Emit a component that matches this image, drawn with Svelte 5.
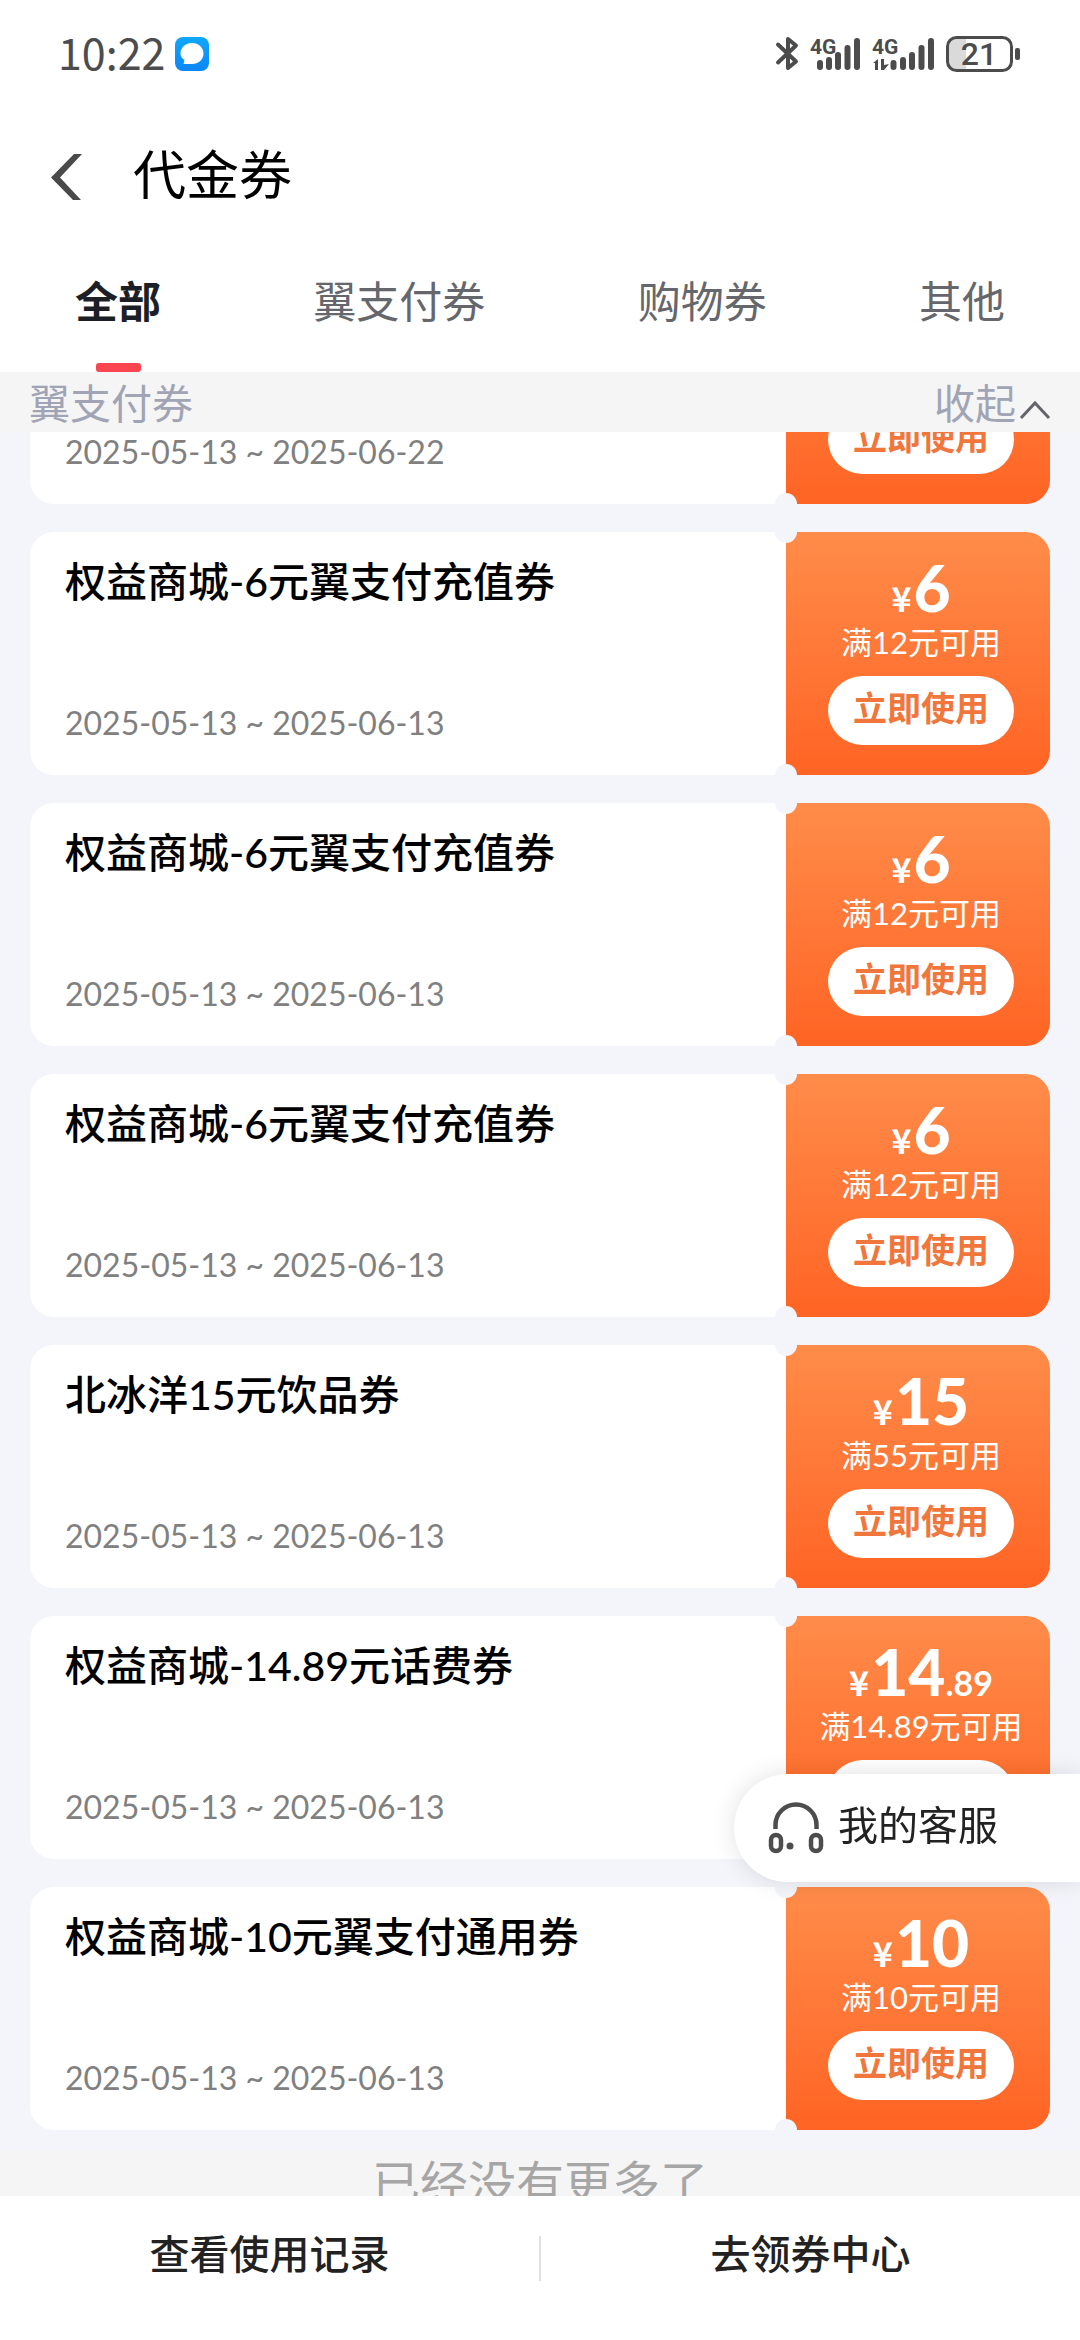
<script>
  const tabs = ['全部', '翼支付券', '购物券', '其他'];
  const coupons = [
    { title: '', date: '2025-05-13 ~ 2025-06-22', whole: '', cents: '', limit: '' },
    { title: '权益商城-6元翼支付充值券', date: '2025-05-13 ~ 2025-06-13', whole: '6', cents: '', limit: '12' },
    { title: '权益商城-6元翼支付充值券', date: '2025-05-13 ~ 2025-06-13', whole: '6', cents: '', limit: '12' },
    { title: '权益商城-6元翼支付充值券', date: '2025-05-13 ~ 2025-06-13', whole: '6', cents: '', limit: '12' },
    { title: '北冰洋15元饮品券', date: '2025-05-13 ~ 2025-06-13', whole: '15', cents: '', limit: '55' },
    { title: '权益商城-14.89元话费券', date: '2025-05-13 ~ 2025-06-13', whole: '14', cents: '.89', limit: '14.89' },
    { title: '权益商城-10元翼支付通用券', date: '2025-05-13 ~ 2025-06-13', whole: '10', cents: '', limit: '10' }
  ];

  let active = $state(0);

  // The list opens with the first coupon scrolled partly out of view.
  function openScrolled(node) {
    node.scrollTop = 171;
  }
</script>

<div class="page">
  <div class="status">
    <span class="time">10:22</span>
    <svg class="chat" width="34" height="34" viewBox="0 0 34 34" aria-hidden="true">
      <defs>
        <linearGradient id="chatbg" x1="0" y1="0" x2="0" y2="1">
          <stop offset="0" stop-color="#10a8fb" />
          <stop offset="1" stop-color="#0a86fa" />
        </linearGradient>
      </defs>
      <rect width="34" height="34" rx="8" fill="url(#chatbg)" />
      <path d="M17 6c6.500 0 11.500 4.500 11.500 10.500S23.500 27 17 27H8.500l1-4C7 21.500 5.500 19.500 5.500 16.500 5.500 10.500 10.500 6 17 6z" fill="#fff" />
    </svg>
    <svg class="signals" width="246" height="40" viewBox="0 0 246 40" aria-hidden="true">
      <g fill="none" stroke="#4c4c4c" stroke-width="4" stroke-linecap="round" stroke-linejoin="round">
        <path d="M4 10.500 22 27.500 14 34V23" />
        <path d="M4 28.500 22 11.500 14 5V19" />
      </g>
      <g class="net" fill="#4c4c4c">
        <text x="36" y="20">4G</text>
        <text x="98" y="20">4G</text>
      </g>
      <g stroke="#4c4c4c" stroke-width="6" stroke-linecap="round">
        <path d="M46 29v4M55 26v7M64 21v12M73.500 14v19M83 7v26" />
        <path d="M119.500 29v4M129 26v7M138 21v12M147.500 14v19M157 7v26" />
      </g>
      <path d="M99 29l5-4v11h-3v-7zM107 25h3v6l5-1-5 6h-3z" fill="#4c4c4c" />
      <path d="M181 4h11v31h-11q-7-1-7-8V12q0-7 7-8z" fill="#dadada" />
      <rect x="173.500" y="3.500" width="64" height="33" rx="9" fill="none" stroke="#4c4c4c" stroke-width="3" />
      <rect x="241" y="14" width="5" height="12" rx="2" fill="#4c4c4c" />
      <text class="level" x="205" y="31" text-anchor="middle" fill="#4c4c4c">21</text>
    </svg>
  </div>

  <header>
    <button class="back" aria-label="返回">
      <svg width="34" height="48" viewBox="0 0 34 48" aria-hidden="true">
        <path d="M25 1h8L11 24.500 32 47h-8L2 24.500z" fill="#4a4a4a" />
      </svg>
    </button>
    <h1>代金券</h1>
  </header>

  <nav>
    {#each tabs as tab, i}
      <button class="tab" class:on={active === i} onclick={() => (active = i)}>{tab}</button>
    {/each}
  </nav>

  <div class="group">
    <span>翼支付券</span>
    <button class="fold">
      收起
      <svg width="32" height="20" viewBox="0 0 32 20" aria-hidden="true">
        <path d="M2 18 16 3l14 15" fill="none" stroke="#63656b" stroke-width="3" />
      </svg>
    </button>
  </div>

  <main use:openScrolled>
    <ul>
      {#each coupons as c}
        <li>
          <div class="info">
            {#if c.title}<h2>{c.title}</h2>{/if}
            <p class="date">{c.date}</p>
          </div>
          <div class="value">
            {#if c.whole}
              <p class="price"><span class="unit">¥</span><b>{c.whole}</b>{#if c.cents}<span class="cents">{c.cents}</span>{/if}</p>
              <p class="limit">满{c.limit}元可用</p>
            {/if}
            <button class="use">立即使用</button>
          </div>
        </li>
      {/each}
    </ul>
    <p class="end">已经没有更多了</p>
  </main>

  <footer>
    <a href="#records">查看使用记录</a>
    <i></i>
    <a href="#center">去领券中心</a>
  </footer>

  <button class="service">
    <svg width="56" height="54" viewBox="0 0 56 54" aria-hidden="true">
      <g fill="none" stroke="#4d4d4d" stroke-width="4.500">
        <path d="M7.500 28V24a20.500 20.500 0 0 1 41 0v4" />
        <rect x="3" y="34" width="10" height="16" rx="5" />
        <rect x="43" y="34" width="10" height="16" rx="5" />
      </g>
      <circle cx="22" cy="45" r="3.500" fill="#4d4d4d" />
    </svg>
    <span>我的客服</span>
  </button>
</div>

<style>
  :global(body) {
    margin: 0;
    background: #fff;
  }
  .page {
    position: relative;
    display: flex;
    flex-direction: column;
    height: 100vh;
    background: #fff;
    color: #000;
    font-family: Lato, 'Noto Sans CJK SC', sans-serif;
  }
  h1, h2, p, ul {
    margin: 0;
    padding: 0;
    font-weight: 400;
  }
  button {
    margin: 0;
    padding: 0;
    border: 0;
    background: none;
    color: inherit;
    font: inherit;
    cursor: pointer;
  }
  svg {
    display: block;
    flex: none;
  }
  .status {
    display: flex;
    align-items: center;
    height: 108px;
    padding: 0 60px 0 58px;
    color: #4c4c4c;
  }
  .time {
    padding-bottom: 6px;
    font-family: 'Noto Sans CJK SC', sans-serif;
    font-size: 43px;
    line-height: 60px;
  }
  .chat {
    margin-left: 10px;
  }
  .signals {
    margin-left: auto;
  }
  .net {
    font: 700 21px Roboto, sans-serif;
  }
  .level {
    font: 500 32px Roboto, sans-serif;
  }
  header {
    display: flex;
    align-items: center;
    gap: 50px;
    height: 138px;
    padding: 0 49px;
  }
  h1 {
    padding-bottom: 4px;
    font-size: 53px;
    line-height: 80px;
  }
  nav {
    display: flex;
    justify-content: space-between;
    height: 126px;
    padding: 0 75px;
    color: #65676d;
  }
  .tab {
    position: relative;
    height: 126px;
    padding-bottom: 14px;
    font-size: 43px;
    line-height: 60px;
  }
  .tab.on {
    color: #1d1f26;
    font-weight: 700;
  }
  .tab.on::after {
    content: '';
    position: absolute;
    bottom: 0;
    left: 50%;
    width: 45px;
    height: 9px;
    margin-left: -22px;
    border-radius: 3px;
    background: #fb4652;
  }
  .group {
    display: flex;
    align-items: center;
    justify-content: space-between;
    box-sizing: border-box;
    height: 60px;
    padding: 4px 29px 0;
    background: #f5f5f5;
    color: #a0a4b4;
    font-size: 41px;
    line-height: 56px;
  }
  .fold {
    display: flex;
    align-items: center;
    gap: 3px;
  }
  .fold svg {
    margin-top: 12px;
  }
  main {
    flex: 1;
    min-height: 0;
    overflow-y: auto;
    scrollbar-width: none;
    background: #f5f5f5;
  }
  ul {
    display: flex;
    flex-direction: column;
    gap: 28px;
    padding: 0 30px 20px;
    background: #f4f5fa;
    list-style: none;
  }
  li {
    position: relative;
    display: flex;
    min-height: 243px;
  }
  li::before,
  li::after {
    content: '';
    position: absolute;
    right: 253px;
    width: 22px;
    height: 11px;
    background: #f4f5fa;
  }
  li::before {
    top: 0;
    border-radius: 0 0 11px 11px;
  }
  li::after {
    bottom: 0;
    border-radius: 11px 11px 0 0;
  }
  .info {
    display: flex;
    flex: 1;
    flex-direction: column;
    padding: 20px 36px 28px 35px;
    border-radius: 24px 0 0 24px;
    background: #fff;
  }
  h2 {
    font-size: 41px;
    font-weight: 500;
    line-height: 60px;
  }
  .date {
    margin-top: auto;
    color: #808080;
    font-size: 32px;
    line-height: 48px;
  }
  .value {
    display: flex;
    flex-direction: column;
    align-items: center;
    box-sizing: border-box;
    width: 264px;
    padding: 26px 0 30px 6px;
    border-radius: 0 24px 24px 0;
    background: linear-gradient(#ff8c4a, #ff6424);
    color: #fff;
  }
  .price {
    height: 60px;
    font-weight: 700;
    line-height: 60px;
    white-space: nowrap;
  }
  .price b {
    font-size: 64px;
  }
  .unit,
  .cents {
    font-size: 34px;
  }
  .unit {
    margin-right: 2px;
    font-family: 'Noto Sans CJK SC', sans-serif;
    font-weight: 700;
    line-height: 34px;
  }
  .limit {
    margin-top: 2px;
    font-size: 31px;
    line-height: 44px;
    white-space: nowrap;
  }
  .use {
    width: 186px;
    height: 69px;
    margin-top: auto;
    padding-bottom: 6px;
    border-radius: 35px;
    background: #fff;
    color: #f0763c;
    font-size: 34px;
    font-weight: 700;
    line-height: 48px;
  }
  .end {
    height: 100px;
    color: #a6a6a6;
    font-size: 48px;
    line-height: 66px;
    text-align: center;
  }
  footer {
    display: flex;
    align-items: center;
    height: 144px;
  }
  footer a {
    flex: 1;
    padding-bottom: 28px;
    color: #222;
    font-size: 40px;
    font-weight: 500;
    line-height: 60px;
    text-align: center;
    text-decoration: none;
  }
  footer i {
    width: 2px;
    height: 45px;
    margin-bottom: 20px;
    background: #e0e0e0;
  }
  .service {
    position: absolute;
    right: 0;
    bottom: 458px;
    display: flex;
    align-items: center;
    gap: 14px;
    height: 108px;
    padding: 0 82px 0 34px;
    border-radius: 54px 0 0 54px;
    background: #fff;
    box-shadow: 0 0 24px rgba(0, 0, 0, 0.12);
    color: #222;
    font-size: 40px;
    line-height: 56px;
  }
  .service span {
    padding-bottom: 6px;
  }
</style>
